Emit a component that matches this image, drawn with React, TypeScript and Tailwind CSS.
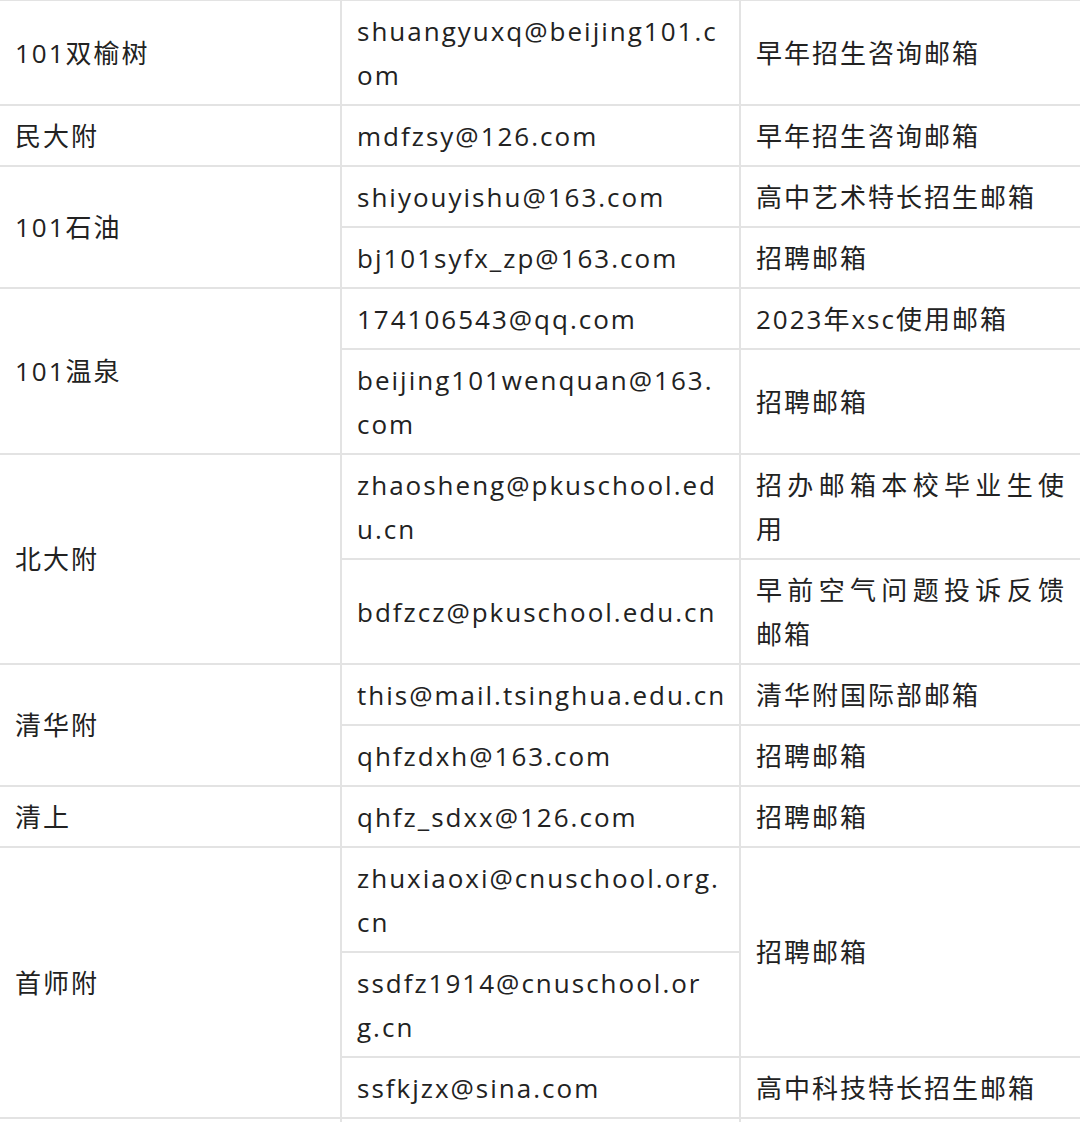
import React from "react";

type Cell = { lines: string[]; rowSpan?: number; first?: boolean };
type Row = Cell[];

const rows: Row[] = [
  [{ lines: ["101双榆树"], first: true }, { lines: ["shuangyuxq@beijing101.c", "om"] }, { lines: ["早年招生咨询邮箱"] }],
  [{ lines: ["民大附"], first: true }, { lines: ["mdfzsy@126.com"] }, { lines: ["早年招生咨询邮箱"] }],
  [{ lines: ["101石油"], rowSpan: 2, first: true }, { lines: ["shiyouyishu@163.com"] }, { lines: ["高中艺术特长招生邮箱"] }],
  [{ lines: ["bj101syfx_zp@163.com"] }, { lines: ["招聘邮箱"] }],
  [{ lines: ["101温泉"], rowSpan: 2, first: true }, { lines: ["174106543@qq.com"] }, { lines: ["2023年xsc使用邮箱"] }],
  [{ lines: ["beijing101wenquan@163.", "com"] }, { lines: ["招聘邮箱"] }],
  [{ lines: ["北大附"], rowSpan: 2, first: true }, { lines: ["zhaosheng@pkuschool.ed", "u.cn"] }, { lines: ["招办邮箱本校毕业生使", "用"] }],
  [{ lines: ["bdfzcz@pkuschool.edu.cn"] }, { lines: ["早前空气问题投诉反馈", "邮箱"] }],
  [{ lines: ["清华附"], rowSpan: 2, first: true }, { lines: ["this@mail.tsinghua.edu.cn"] }, { lines: ["清华附国际部邮箱"] }],
  [{ lines: ["qhfzdxh@163.com"] }, { lines: ["招聘邮箱"] }],
  [{ lines: ["清上"], first: true }, { lines: ["qhfz_sdxx@126.com"] }, { lines: ["招聘邮箱"] }],
  [{ lines: ["首师附"], rowSpan: 3, first: true }, { lines: ["zhuxiaoxi@cnuschool.org.", "cn"] }, { lines: ["招聘邮箱"], rowSpan: 2 }],
  [{ lines: ["ssdfz1914@cnuschool.or", "g.cn"] }],
  [{ lines: ["ssfkjzx@sina.com"] }, { lines: ["高中科技特长招生邮箱"] }],
];

export default function App() {
  return (
    <div
      className="w-[1080px] overflow-hidden bg-white text-[#222]"
      style={{ fontFamily: '"Open Sans", "Noto Sans CJK SC", sans-serif' }}
    >
      <table className="-mt-[1px] w-[1081px] table-fixed border-collapse text-[26px] leading-[44px] tracking-[2px]">
        <colgroup>
          <col className="w-[341px]" />
          <col className="w-[399px]" />
          <col className="w-[341px]" />
        </colgroup>
        <tbody>
          {rows.map((row, ri) => (
            <tr key={ri}>
              {row.map((c, ci) => (
                <td
                  key={ci}
                  rowSpan={c.rowSpan}
                  className={
                    "border-2 border-[#e3e3e3] py-[7.5px] pl-[15px] pr-[6px] align-middle whitespace-nowrap " +
                    (c.first ? "border-l-0" : "")
                  }
                >
                  {c.lines.length === 1 ? (
                    <div>{c.lines[0]}</div>
                  ) : (
                    <>
                      <div className="w-[310px] text-justify [text-align-last:justify]">{c.lines[0]}</div>
                      <div>{c.lines[1]}</div>
                    </>
                  )}
                </td>
              ))}
            </tr>
          ))}
          <tr>
            <td className="h-[61px] border-2 border-l-0 border-[#e3e3e3]"></td>
            <td className="h-[61px] border-2 border-[#e3e3e3]"></td>
            <td className="h-[61px] border-2 border-[#e3e3e3]"></td>
          </tr>
        </tbody>
      </table>
    </div>
  );
}
